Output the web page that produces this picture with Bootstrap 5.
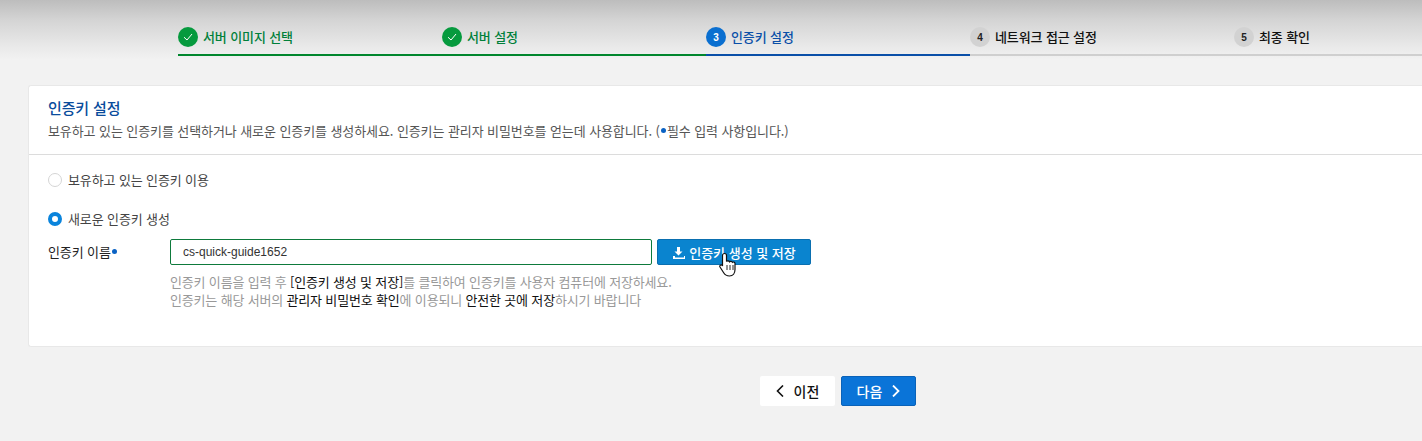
<!DOCTYPE html>
<html lang="ko">
<head>
<meta charset="utf-8">
<title>인증키 설정</title>
<link href="https://cdn.jsdelivr.net/npm/bootstrap@5.3.0/dist/css/bootstrap.min.css" rel="stylesheet">
<style>
html,body{height:441px;overflow:hidden}
body{background:#f2f2f2;font-family:"Noto Sans CJK KR","Liberation Sans",sans-serif;font-size:13px;color:#222;letter-spacing:-.12px}
.topzone{height:85px;padding-left:178px;background:linear-gradient(#bdbdbd 0,#d4d4d4 20px,#e8e8e8 45px,#f2f2f2 60px);background-repeat:no-repeat;background-size:100% 60px}
.steps{padding-top:27px}
.stepi{width:264px;height:29px;border-bottom:2px solid #cfcfcf;font-weight:500;color:#111;gap:5px;padding-bottom:7px}
.stepi.laststep{flex:1 1 0;width:auto}
.stepi.finished{border-color:#00862d;color:#00803a}
.stepi.current{border-color:#0a4fa8;color:#0a4fa8}
.numdot{width:20px;height:20px;border-radius:50%;background:#d2d2d2;color:#222;font-size:10px;font-family:"Liberation Sans",sans-serif;font-weight:700;flex:none}
.finished .numdot{background:#069a3e}
.current .numdot{background:#0a6fd0;color:#fff}
.panel{margin-left:28px;height:262px;background:#fff;border:1px solid #e8e8e8;border-right:0;border-radius:3px 0 0 3px}
.panelhead{height:69px;border-bottom:1px solid #dcdcdc;padding:13px 19px 0}
.paneltitle{font-size:15px;font-weight:500;color:#0a4c9c;line-height:18px;margin:0 0 5px}
.panelsub{color:#555;line-height:18px;margin:0;letter-spacing:-.09px}
.reqdot{display:inline-block;width:5px;height:5px;border-radius:50%;background:#0a62c4;vertical-align:3px;margin:0 1px}
.panelbody{padding:16px 19px 0}
.radiorow{height:18px;gap:6px;color:#444;line-height:18px}
.radiodot{width:14px;height:14px;border-radius:50%;border:1px solid #d5d5d5;background:#fff;flex:none}
.radiodot.picked{border:4px solid #0a84dc}
.gap-radio{margin-top:21px}
.namerow{margin-top:11px}
.namelabel{width:122px;color:#222;line-height:26px;flex:none}
.nameinput{width:482px;height:26px;border:1px solid #0e7a3c;border-radius:2px;padding:0 12px;font-family:"Liberation Sans",sans-serif;font-size:12px;color:#333;letter-spacing:0;background:#fff;outline:0}
.savebtn{width:154px;height:26px;margin-left:5px;padding:0;background:#0a84cf;border:1px solid #0a6fb0;border-radius:2px;color:#fff;font-size:13px;font-weight:500;gap:4px;line-height:1}
.savebtn:hover{background:#0a84cf;color:#fff}
.helptext{margin:8px 0 0 122px;color:#999;line-height:18px;letter-spacing:-.17px}
.helptext b{font-weight:400;color:#111}
.cursorwrap{position:absolute;left:719px;top:252px;width:22px;height:26px}
.footbtns{margin-top:29px;margin-left:760px;gap:6px}
.prevbtn,.nextbtn{height:30px;border-radius:2px;font-size:14px;font-weight:500;padding:0;gap:10px;line-height:1}
.prevbtn{width:75px;background:#fff;border:0;color:#111}
.nextbtn{width:75px;background:#0a74d8;border:1px solid #0a62b8;color:#fff}
.prevbtn:hover{background:#fff;color:#111}
.nextbtn:hover{background:#0a74d8;color:#fff}
</style>
</head>
<body>
<div class="topzone">
  <div class="steps d-flex">
    <div class="stepi finished d-flex align-items-center"><span class="numdot d-flex align-items-center justify-content-center"><svg width="12" height="12" viewBox="0 0 12 12" fill="none" stroke="#fff" stroke-width="1"><path d="M2 6.200 5 9l5-6"/></svg></span>서버 이미지 선택</div>
    <div class="stepi finished d-flex align-items-center"><span class="numdot d-flex align-items-center justify-content-center"><svg width="12" height="12" viewBox="0 0 12 12" fill="none" stroke="#fff" stroke-width="1"><path d="M2 6.200 5 9l5-6"/></svg></span>서버 설정</div>
    <div class="stepi current d-flex align-items-center"><span class="numdot d-flex align-items-center justify-content-center">3</span>인증키 설정</div>
    <div class="stepi d-flex align-items-center"><span class="numdot d-flex align-items-center justify-content-center">4</span>네트워크 접근 설정</div>
    <div class="stepi laststep d-flex align-items-center"><span class="numdot d-flex align-items-center justify-content-center">5</span>최종 확인</div>
  </div>
</div>
<div class="panel">
  <div class="panelhead">
    <h2 class="paneltitle">인증키 설정</h2>
    <p class="panelsub">보유하고 있는 인증키를 선택하거나 새로운 인증키를 생성하세요. 인증키는 관리자 비밀번호를 얻는데 사용합니다. (<span class="reqdot"></span>필수 입력 사항입니다.)</p>
  </div>
  <div class="panelbody">
    <div class="radiorow d-flex align-items-center"><span class="radiodot"></span>보유하고 있는 인증키 이용</div>
    <div class="radiorow gap-radio d-flex align-items-center"><span class="radiodot picked"></span>새로운 인증키 생성</div>
    <div class="namerow d-flex">
      <div class="namelabel">인증키 이름<span class="reqdot"></span></div>
      <input class="nameinput" type="text" value="cs-quick-guide1652">
      <button class="btn savebtn d-flex align-items-center justify-content-center" type="button"><svg width="13" height="13" viewBox="0 0 13 13" fill="#fff"><path d="M5 1h3v4.500h2.500L6.500 9.500 2.500 5.500H5zM1 10h2v1.500h9V10h2v3H1z"/></svg>인증키 생성 및 저장</button>
    </div>
    <p class="helptext">인증키 이름을 입력 후 <b>[인증키 생성 및 저장]</b>를 클릭하여 인증키를 사용자 컴퓨터에 저장하세요.<br>인증키는 해당 서버의 <b>관리자 비밀번호 확인</b>에 이용되니 <b>안전한 곳에 저장</b>하시기 바랍니다</p>
  </div>
</div>
<div class="footbtns d-flex">
  <button class="btn prevbtn d-flex align-items-center justify-content-center" type="button"><svg width="8" height="12" viewBox="0 0 8 12" fill="none" stroke="#111" stroke-width="1.600"><path d="M7 .5 1.500 6 7 11.500"/></svg>이전</button>
  <button class="btn nextbtn d-flex align-items-center justify-content-center" type="button">다음<svg width="8" height="12" viewBox="0 0 8 12" fill="none" stroke="#fff" stroke-width="1.800"><path d="M1 .5 6.500 6 1 11.500"/></svg></button>
</div>
<svg class="cursorwrap" viewBox="0 0 22 26"><path d="M5.500 1.500c1.200 0 2 .8 2 2v6c.4-.8 2.600-.8 3 .3.500-.7 2.500-.7 3 .5.700-.6 2.500-.3 2.500 1.200v6c0 3.500-2 6.500-5.500 6.500-3 0-4.500-1-6-3.500L1 15c-.8-1.400.9-2.800 2.200-1.600l.3.600V3.500c0-1.200.8-2 2-2z" fill="#fff" stroke="#111" stroke-width="1.200"/><path d="M8 13v5M11 13v5M14 13v5" stroke="#111" stroke-width=".9"/></svg>
<script src="https://cdn.jsdelivr.net/npm/bootstrap@5.3.0/dist/js/bootstrap.bundle.min.js"></script>
</body>
</html>
